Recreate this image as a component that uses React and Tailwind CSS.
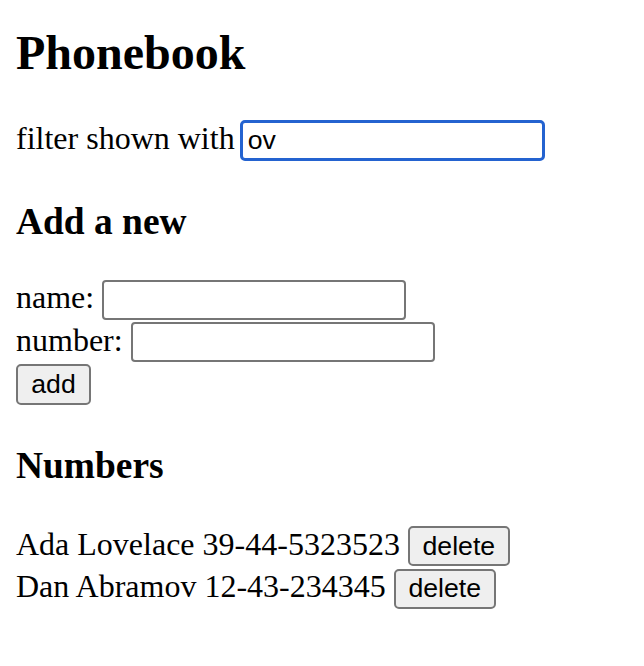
import React from "react";

const inputCls =
  "h-[40px] w-[304px] border-2 border-[#767676] rounded-[4px] px-[4px] bg-white text-[26.67px] font-['Liberation_Sans',Arial,sans-serif] text-black outline-none";
const btnCls =
  "border-2 border-[#767676] rounded-[5px] bg-[#efefef] text-[26.67px] leading-none font-['Liberation_Sans',Arial,sans-serif] text-black flex items-center justify-center";

export default function App() {
  const persons = [
    { name: "Ada Lovelace", number: "39-44-5323523" },
    { name: "Dan Abramov", number: "12-43-234345" },
  ];
  return (
    <div className="min-h-[666px] w-[644px] bg-white px-4 pt-[25px] font-['Liberation_Serif','Times_New_Roman',serif] text-[32px] leading-[37px] text-black">
      <h2 className="text-[48px] font-bold leading-[55px]">Phonebook</h2>
      <div className="mt-[40px] flex items-baseline">
        <span>filter shown with</span>
        <input
          className="ml-[5px] h-[41px] w-[305px] rounded-[5px] border-[3px] border-[#2463d0] bg-white px-[5px] text-[26.67px] font-['Liberation_Sans',Arial,sans-serif] text-black outline-none"
          defaultValue="ov"
          readOnly
        />
      </div>
      <h3 className="mt-[39px] text-[37.44px] font-bold leading-[43px]">Add a new</h3>
      <form className="mt-[36px]" onSubmit={(e) => e.preventDefault()}>
        <div className="flex items-baseline">
          <span>name:</span>
          <input className={"ml-[8px] " + inputCls} />
        </div>
        <div className="mt-[2px] flex items-baseline">
          <span>number:</span>
          <input className={"ml-[8px] " + inputCls} />
        </div>
        <div className="mt-[2px]">
          <button type="submit" className={"h-[41px] w-[75px] " + btnCls}>
            add
          </button>
        </div>
      </form>
      <h3 className="mt-[39px] text-[37.44px] font-bold leading-[43px]">Numbers</h3>
      <div className="mt-[39px]">
        {persons.map((p) => (
          <div key={p.name} className="mb-[2px] flex items-baseline">
            <span>
              {p.name} {p.number}
            </span>
            <button className={"ml-[8px] h-[40px] w-[102px] " + btnCls}>delete</button>
          </div>
        ))}
      </div>
    </div>
  );
}
